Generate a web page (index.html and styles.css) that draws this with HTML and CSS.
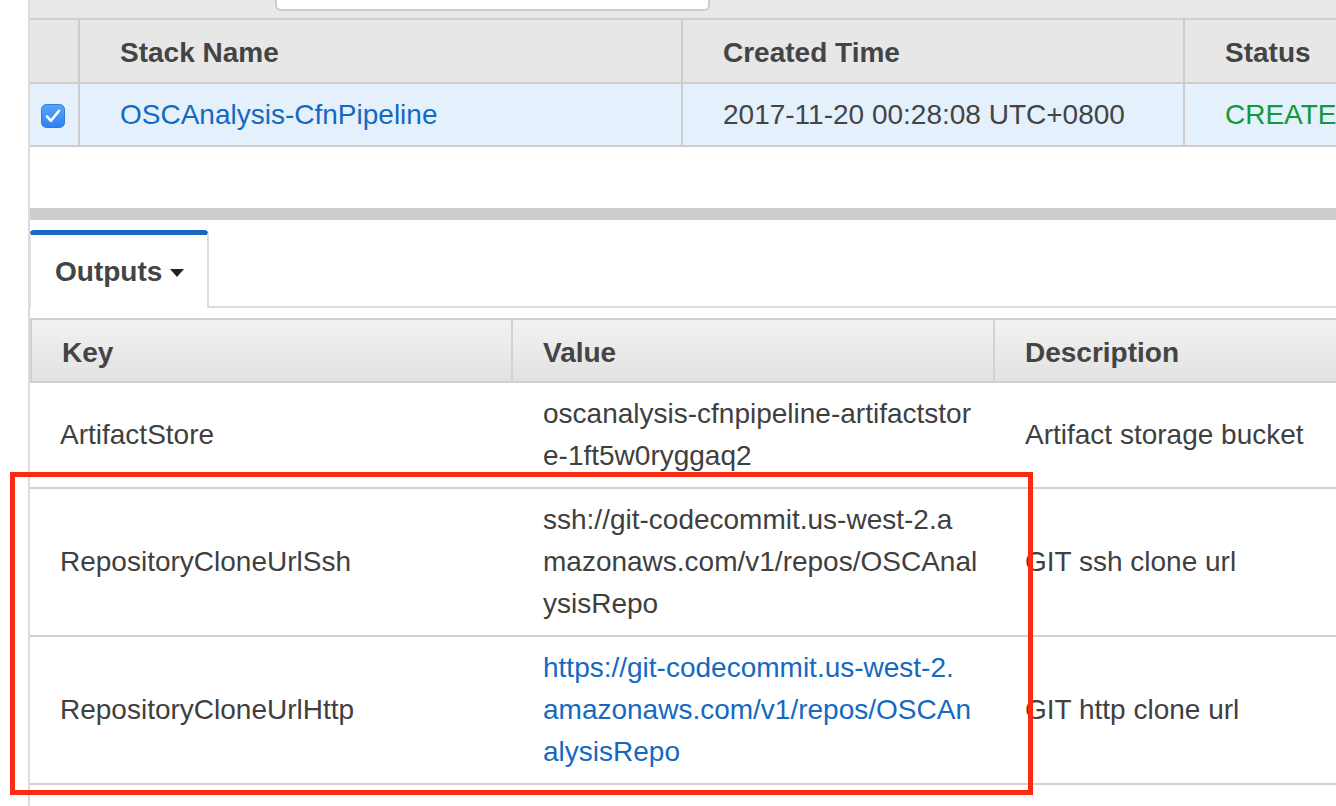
FILE: index.html
```html
<!DOCTYPE html>
<html lang="en">
<head>
<meta charset="utf-8">
<title>CloudFormation Stack Outputs</title>
<link rel="stylesheet" href="styles.css">
</head>
<body>
<div class="page">
  <div class="gutter"></div>
  <main class="main">
    <div class="toolbar"><div class="search"></div></div>
    <table class="stacks">
      <thead>
        <tr>
          <th class="c-check"></th>
          <th class="c-name">Stack Name</th>
          <th class="c-time">Created Time</th>
          <th class="c-status">Status</th>
        </tr>
      </thead>
      <tbody>
        <tr class="selected">
          <td class="cb-cell">
            <svg class="checkbox" width="24" height="24" viewBox="0 0 24 24">
              <defs>
                <linearGradient id="cbg" x1="0" y1="0" x2="0" y2="1">
                  <stop offset="0" stop-color="#55a5fb"/>
                  <stop offset="1" stop-color="#2f80f1"/>
                </linearGradient>
              </defs>
              <rect x="0.5" y="0.5" width="23" height="23" rx="5" fill="url(#cbg)" stroke="#3079e0"/>
              <path d="M6 12.5 L10 16.8 L18 6.8" fill="none" stroke="#fff" stroke-width="2.6" stroke-linecap="round" stroke-linejoin="round"/>
            </svg>
          </td>
          <td><a class="link" href="#">OSCAnalysis-CfnPipeline</a></td>
          <td>2017-11-20 00:28:08 UTC+0800</td>
          <td class="ok">CREATE_COMPLETE</td>
        </tr>
      </tbody>
    </table>
    <div class="spacer"></div>
    <div class="splitter"></div>
    <div class="tabs">
      <div class="tab">Outputs <span class="caret"></span></div>
    </div>
    <table class="outputs">
      <thead>
        <tr>
          <th class="c-key">Key</th>
          <th class="c-value">Value</th>
          <th class="c-desc">Description</th>
        </tr>
      </thead>
      <tbody>
        <tr>
          <td>ArtifactStore</td>
          <td class="val">oscanalysis-cfnpipeline-artifactstor<br>e-1ft5w0ryggaq2</td>
          <td>Artifact storage bucket</td>
        </tr>
        <tr>
          <td>RepositoryCloneUrlSsh</td>
          <td class="val">ssh://git-codecommit.us-west-2.a<br>mazonaws.com/v1/repos/OSCAnal<br>ysisRepo</td>
          <td>GIT ssh clone url</td>
        </tr>
        <tr>
          <td>RepositoryCloneUrlHttp</td>
          <td class="val"><a class="link" href="#">https://git-codecommit.us-west-2.<br>amazonaws.com/v1/repos/OSCAn<br>alysisRepo</a></td>
          <td>GIT http clone url</td>
        </tr>
      </tbody>
    </table>
  </main>
</div>
<div class="highlight"></div>
</body>
</html>
```
FILE: styles.css
```css
html, body {
  margin: 0;
  padding: 0;
  background: #fff;
}
body {
  width: 1336px;
  height: 806px;
  overflow: hidden;
  position: relative;
  font-family: "Liberation Sans", Arial, Helvetica, sans-serif;
  font-size: 28px;
  color: #444;
}
.page {
  display: flex;
  height: 806px;
}
.gutter {
  width: 28px;
  flex: none;
}
.main {
  flex: 1;
  min-width: 0;
  border-left: 2px solid #dcdcdc;
  overflow: hidden;
}
.toolbar {
  height: 18px;
  background: #e8e8e8;
  border-bottom: 2px solid #cfcfcf;
}
.search {
  margin-left: 245px;
  width: 435px;
  height: 11px;
  box-sizing: border-box;
  background: #fff;
  border: 2px solid #cdcdcd;
  border-top: none;
  border-radius: 0 0 6px 6px;
}
table {
  border-spacing: 0;
  table-layout: fixed;
}
th, td {
  box-sizing: border-box;
  text-align: left;
  white-space: nowrap;
  line-height: 42px;
}
.stacks {
  width: 1560px;
}
.stacks th {
  height: 64px;
  padding: 12px 0 8px 40px;
  background: #e7e7e7;
  font-weight: bold;
  color: #444;
  border-right: 2px solid #cdcdcd;
  border-bottom: 2px solid #cdcdcd;
}
.stacks td {
  height: 63px;
  padding: 10px 0 9px 40px;
  background: #e4f0fc;
  border-right: 2px solid #cdcdcd;
  border-bottom: 2px solid #cdcdcd;
}
.stacks .c-check { width: 50px; padding: 0; }
.stacks .c-name { width: 603px; }
.stacks .c-time { width: 502px; }
.stacks .c-status { width: 405px; }
.stacks .cb-cell {
  padding: 0;
  text-align: center;
  vertical-align: middle;
}
.checkbox {
  display: inline-block;
  vertical-align: middle;
  margin-left: -2px;
}
.link {
  color: #1569c0;
  text-decoration: none;
}
.ok {
  color: #13993a;
}
.spacer {
  height: 61px;
}
.splitter {
  height: 12px;
  background: #cdcdcd;
}
.tabs {
  display: flex;
  margin-top: 10px;
  border-bottom: 2px solid #dedede;
}
.tab {
  width: 180px;
  height: 78px;
  box-sizing: border-box;
  margin-bottom: -2px;
  margin-left: -1px;
  padding-left: 24px;
  display: flex;
  align-items: center;
  gap: 8px;
  background: #fff;
  border: 2px solid #dedede;
  border-top: 5px solid #1a67c1;
  border-bottom: none;
  border-radius: 5px 5px 0 0;
  font-weight: bold;
  color: #444;
}
.caret {
  width: 0;
  height: 0;
  border-left: 7.5px solid transparent;
  border-right: 7.5px solid transparent;
  border-top: 8px solid #222;
  margin-top: 2px;
}
.outputs {
  width: 1400px;
  margin-top: 10px;
}
.outputs th {
  height: 65px;
  padding: 12px 0 7px 30px;
  font-weight: bold;
  color: #444;
  background: linear-gradient(#f2f2f2, #e2e2e2);
  border-top: 2px solid #cfcfcf;
  border-bottom: 2px solid #cfcfcf;
  border-right: 2px solid #d2d2d2;
}
.outputs .c-key {
  width: 483px;
  border-left: 2px solid #cfcfcf;
}
.outputs .c-value { width: 482px; }
.outputs .c-desc { width: 435px; border-right: none; }
.outputs td {
  padding: 10px 0 10px 30px;
  vertical-align: middle;
  border-bottom: 2px solid #d2d2d2;
  color: #3f3f3f;
}
.highlight {
  position: absolute;
  left: 10px;
  top: 472px;
  width: 1023px;
  height: 323px;
  box-sizing: border-box;
  border: 5px solid #f92b10;
  pointer-events: none;
}
```
